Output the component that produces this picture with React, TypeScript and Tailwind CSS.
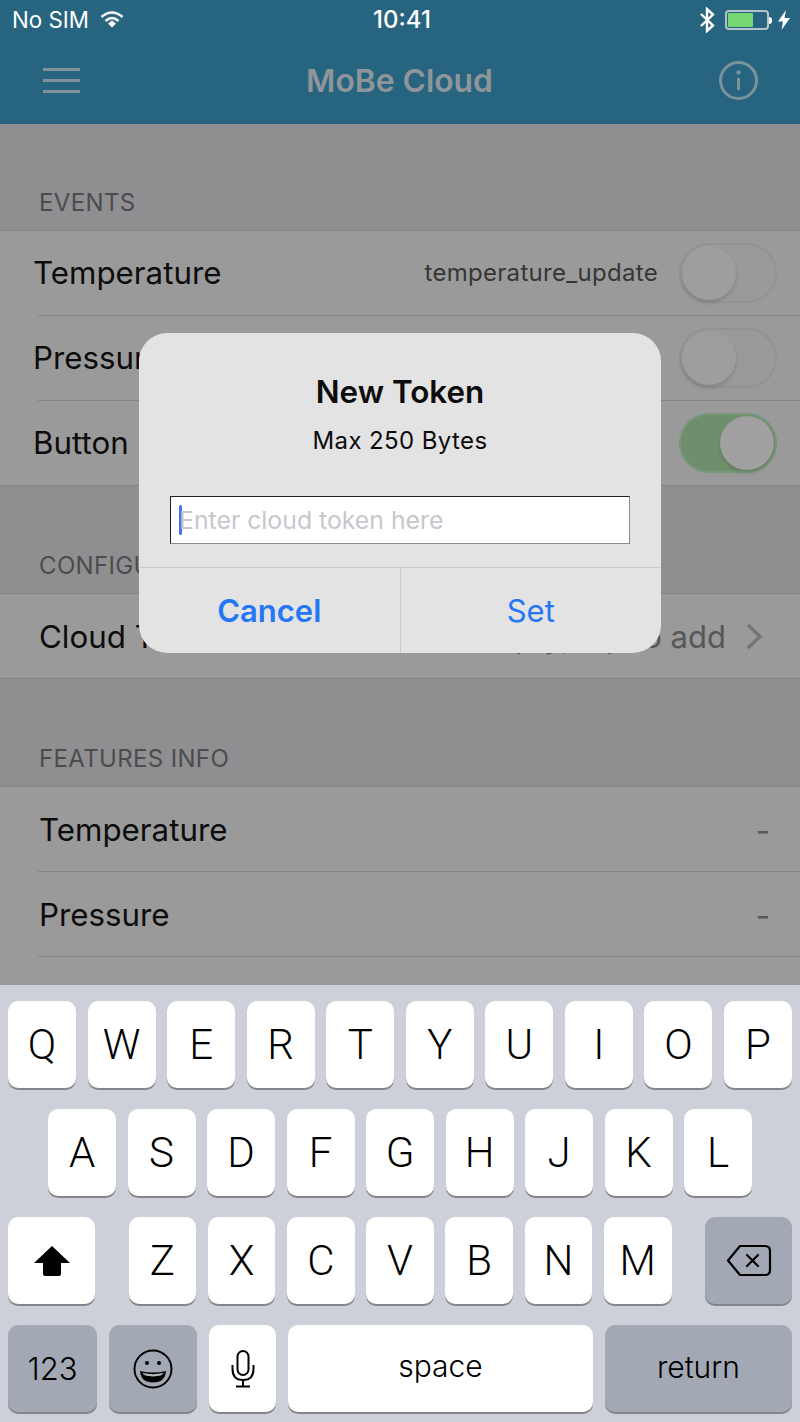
import type { ReactNode } from 'react';

const rowOne = ['Q', 'W', 'E', 'R', 'T', 'Y', 'U', 'I', 'O', 'P'];
const rowTwo = ['A', 'S', 'D', 'F', 'G', 'H', 'J', 'K', 'L'];
const rowThree = ['Z', 'X', 'C', 'V', 'B', 'N', 'M'];

function Toggle({ on }: { on?: boolean }) {
  if (on) {
    return (
      <div className="mb-[2px] flex h-[60px] w-[98px] items-center justify-end rounded-full border-2 border-[#76987a] bg-[#6f8f6c] pr-px">
        <div className="h-[54px] w-[54px] rounded-full bg-[#a0a0a0] shadow-[0_3px_4px_rgba(0,0,0,0.12)]" />
      </div>
    );
  }
  return (
    <div className="mb-[2px] flex h-[60px] w-[98px] items-center rounded-full border-2 border-[#939393] bg-[#9a9a9a] pl-px">
      <div className="h-[54px] w-[54px] rounded-full bg-[#9e9e9e] shadow-[0_3px_4px_rgba(0,0,0,0.14)]" />
    </div>
  );
}

function SectionTitle({ first, children }: { first?: boolean; children: ReactNode }) {
  return (
    <div
      className={`flex items-end pb-[13px] pl-[39px] text-[24px] leading-[28px] tracking-[0.35px] text-[#4c4c4e] ${
        first ? 'h-[106px]' : 'h-[107px]'
      }`}
    >
      {children}
    </div>
  );
}

function Row({ label, left = 40, last, children }: { label: string; left?: 34 | 40; last?: boolean; children?: ReactNode }) {
  return (
    <div className="relative flex h-[85px] items-center justify-between bg-[#9a9a9a]">
      <span className={left === 34 ? 'pl-[33px] text-[31.3px] text-[#0c0c0c]' : 'pl-[39px] pt-[2px] text-[31.3px] text-[#0c0c0c]'}>
        {label}
      </span>
      {children}
      <div className={last ? 'absolute bottom-0 left-0 right-0 h-px bg-[#838383]' : 'absolute bottom-0 left-[38px] right-0 h-px bg-[#868686]'} />
    </div>
  );
}

function Key({ children, dark, className }: { children: ReactNode; dark?: boolean; className?: string }) {
  return (
    <div
      className={`flex h-[87px] items-center justify-center rounded-[10px] shadow-[0_2px_0_#83858b] ${
        dark ? 'bg-[#a3a9b4]' : 'bg-white'
      } ${className ?? ''}`}
    >
      {children}
    </div>
  );
}

function Letter({ value }: { value: string }) {
  return (
    <Key className="w-full flex-1">
      <span className="font-[Roboto,sans-serif] text-[42px] font-light leading-none text-black">{value}</span>
    </Key>
  );
}

function Keyboard() {
  return (
    <div className="flex h-[437px] flex-col gap-[21px] bg-[#cdd0d8] px-2 pt-4">
      <div className="flex gap-[11.5px]">
        {rowOne.map((k) => (
          <Letter key={k} value={k} />
        ))}
      </div>
      <div className="flex gap-[11.5px] px-10">
        {rowTwo.map((k) => (
          <Letter key={k} value={k} />
        ))}
      </div>
      <div className="flex justify-between">
        <Key className="w-[87px]">
          <svg width="38" height="32" viewBox="0 0 38 32">
            <path d="M19 1 L37 18 H28 V29 Q28 31 26 31 H12 Q10 31 10 29 V18 H1 Z" fill="#000" />
          </svg>
        </Key>
        <div className="flex w-[543px] gap-[11.5px]">
          {rowThree.map((k) => (
            <Letter key={k} value={k} />
          ))}
        </div>
        <Key dark className="w-[87px]">
          <svg width="46" height="33" viewBox="0 0 46 33" fill="none" stroke="#000" strokeWidth="2.2" strokeLinejoin="round">
            <path d="M14 2 H39 Q44 2 44 7 V26 Q44 31 39 31 H14 L2 16.5 Z" />
            <path d="M21 11 L32 22 M32 11 L21 22" strokeLinecap="round" />
          </svg>
        </Key>
      </div>
      <div className="flex gap-[12px]">
        <Key dark className="w-[89px]">
          <span className="text-[31px] font-light leading-none text-black">123</span>
        </Key>
        <Key dark className="w-[88px]">
          <svg width="40" height="40" viewBox="0 0 40 40" fill="none" stroke="#000" strokeWidth="1.9">
            <circle cx="20" cy="20" r="18.5" />
            <circle cx="14" cy="14" r="2" fill="#000" stroke="none" />
            <circle cx="26" cy="14" r="2" fill="#000" stroke="none" />
            <path d="M7 22 Q20 25 33 22 Q32 33.5 20 33.5 Q8 33.5 7 22 Z" fill="#000" stroke="none" />
            <path d="M9.5 24 Q20 26.3 30.5 24 Q30 27 20 27.5 Q10 27 9.5 24 Z" fill="#b4b9c2" stroke="none" />
          </svg>
        </Key>
        <Key className="w-[67px]">
          <svg width="24" height="38" viewBox="0 0 24 38" fill="none" stroke="#000" strokeWidth="2">
            <rect x="6.5" y="1" width="11" height="24" rx="5.5" />
            <path d="M1.5 15 V19 Q1.5 30 12 30 Q22.5 30 22.5 19 V15 M12 30 V36.5 M5 36.5 H19" />
          </svg>
        </Key>
        <Key className="w-[305px]">
          <span className="pb-[5px] text-[30px] font-light leading-none text-black">space</span>
        </Key>
        <Key dark className="w-[187px]">
          <span className="pb-[3px] text-[30px] font-light leading-none text-black">return</span>
        </Key>
      </div>
    </div>
  );
}

function StatusBar() {
  return (
    <div className="relative flex h-10 items-center justify-between pl-3 pr-[10px] text-white">
      <div className="flex items-center gap-[11px]">
        <span className="text-[22.3px] font-normal leading-none">No SIM</span>
        <svg width="24" height="17" viewBox="0 0 24 17" fill="none" stroke="#fff" strokeWidth="2.6" className="-mt-[1px]">
          <path d="M1.5 6 Q12 -3 22.5 6" />
          <path d="M5.5 10 Q12 4 18.5 10" />
          <path d="M8 12.5 L12 9.5 L16 12.5 L12 16.5 Z" fill="#fff" stroke="none" />
        </svg>
      </div>
      <span className="absolute left-0 right-0 pl-[4px] text-center text-[24px] font-medium leading-none">10:41</span>
      <div className="flex items-center">
        <svg width="16" height="26" viewBox="0 0 16 26" fill="none" stroke="#fff" strokeWidth="2.4">
          <path d="M2 7 L14 18.5 L8 24 V2 L14 7.5 L2 19" />
        </svg>
        <div className="ml-[10px] flex h-[20px] w-[44px] rounded-[4px] border-2 border-[#b7c3cb] p-px">
          <div className="h-full w-[25px] rounded-[1px] bg-[#76d672]" />
        </div>
        <div className="h-[7px] w-[3px] rounded-r-full bg-white" />
        <svg width="12" height="20" viewBox="0 0 12 20" fill="#fff" className="ml-[6px]">
          <path d="M8 0 L0 11.5 H5 L3.5 20 L12 8 H6.5 Z" />
        </svg>
      </div>
    </div>
  );
}

function NavBar() {
  return (
    <div className="flex h-[84px] items-center justify-between pb-[4px] pl-[43px] pr-[42px]">
      <div className="flex w-[37px] flex-col gap-[8px]">
        <div className="h-[3px] bg-[#7f929b]" />
        <div className="h-[3px] bg-[#7f929b]" />
        <div className="h-[3px] bg-[#7f929b]" />
      </div>
      <span className="pt-[2px] text-[31.8px] font-semibold leading-none text-[#8f9598]">MoBe Cloud</span>
      <svg width="39" height="39" viewBox="0 0 39 39" fill="none" stroke="#7a929c" strokeWidth="3">
        <circle cx="19.5" cy="19.5" r="18" />
        <path d="M19.5 17 V29" strokeWidth="3" />
        <circle cx="19.5" cy="11.5" r="2.2" fill="#7a929c" stroke="none" />
      </svg>
    </div>
  );
}

function TokenDialog() {
  return (
    <div className="absolute left-[139px] top-[333px] flex h-[320px] w-[522px] flex-col rounded-[28px] bg-[#e3e3e3]">
      <div className="pt-[41px] text-center text-[31.4px] font-semibold leading-[36px] text-[#0c0c0c]">New Token</div>
      <div className="mt-[16px] text-center text-[24px] leading-[30px] tracking-[0.4px] text-[#0c0c0c]">Max 250 Bytes</div>
      <div className="ml-[31px] mt-[40px] flex h-[48px] w-[460px] items-center border border-b-[#8b8b8b] border-l-[#222] border-r-[#8b8b8b] border-t-[#222] bg-white pl-[8px]">
        <div className="h-[30px] w-[3px] rounded-full bg-[#4a6ff0]" />
        <span className="-ml-[3px] text-[24.8px] leading-none text-[#c7c7cd]">Enter cloud token here</span>
      </div>
      <div className="mt-[23px] flex flex-1 border-t border-[#c9c9c9] text-[31px] text-[#2477f5]">
        <div className="flex flex-1 items-center justify-center border-r border-[#c9c9c9] pt-px font-semibold">Cancel</div>
        <div className="flex flex-1 items-center justify-center pt-px">Set</div>
      </div>
    </div>
  );
}

export default function App() {
  return (
    <div className="relative flex h-[1422px] w-[800px] flex-col overflow-hidden font-[Inter,sans-serif]">
      <div className="bg-[#26647f]">
        <StatusBar />
        <NavBar />
      </div>

      <div className="flex min-h-0 flex-1 flex-col overflow-hidden bg-[#8f8f91]">
        <SectionTitle first>EVENTS</SectionTitle>
        <div className="h-px bg-[#838383]" />
        <Row label="Temperature" left={34}>
          <div className="flex items-center gap-[21px] pr-[23px]">
            <span className="mb-[1px] text-[24px] tracking-[0.3px] text-[#363636]">temperature_update</span>
            <Toggle />
          </div>
        </Row>
        <Row label="Pressure" left={34}>
          <div className="pr-[23px]">
            <Toggle />
          </div>
        </Row>
        <Row label="Button" left={34} last>
          <div className="pr-[23px]">
            <Toggle on />
          </div>
        </Row>

        <SectionTitle>CONFIGURATION</SectionTitle>
        <div className="h-px bg-[#838383]" />
        <Row label="Cloud Token" last>
          <div className="flex items-center gap-[20px] pr-[37px]">
            <span className="pt-[2px] text-[31px] text-[#575757]">Empty, tap to add</span>
            <svg width="17" height="27" viewBox="0 0 17 27" fill="none" stroke="#757575" strokeWidth="3.4">
              <path d="M2 2 L14 13.5 L2 25" />
            </svg>
          </div>
        </Row>

        <SectionTitle>FEATURES INFO</SectionTitle>
        <div className="h-px bg-[#838383]" />
        <Row label="Temperature">
          <span className="pr-[30px] pt-[3px] text-[31px] text-[#575757]">-</span>
        </Row>
        <Row label="Pressure">
          <span className="pr-[30px] pt-[3px] text-[31px] text-[#575757]">-</span>
        </Row>
        <div className="flex-1 bg-[#9a9a9a]" />
      </div>

      <Keyboard />
      <TokenDialog />
    </div>
  );
}
